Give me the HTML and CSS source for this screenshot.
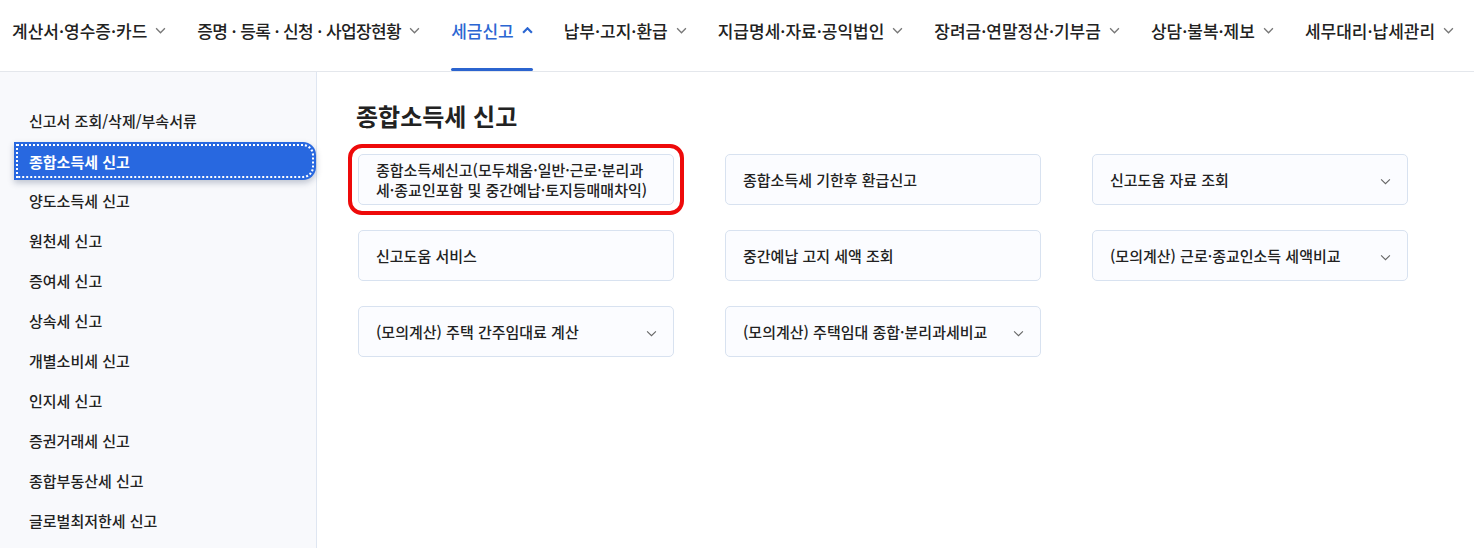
FILE: index.html
```html
<!DOCTYPE html>
<html lang="ko">
<head>
<meta charset="utf-8">
<title>종합소득세 신고</title>
<link rel="stylesheet" href="styles.css">
</head>
<body>
<header class="gnb">
  <nav class="gnb-list">
    <a class="gnb-item"><span>계산서·영수증·카드</span><svg class="chev" viewBox="0 0 10 6"><path d="M1 1l4 4 4-4"/></svg></a>
    <a class="gnb-item"><span class="tight">증명 · 등록 · 신청 · 사업장현황</span><svg class="chev" viewBox="0 0 10 6"><path d="M1 1l4 4 4-4"/></svg></a>
    <a class="gnb-item active"><span>세금신고</span><svg class="chev up" viewBox="0 0 10 6"><path d="M1 5l4-4 4 4"/></svg></a>
    <a class="gnb-item"><span>납부·고지·환급</span><svg class="chev" viewBox="0 0 10 6"><path d="M1 1l4 4 4-4"/></svg></a>
    <a class="gnb-item"><span>지급명세·자료·공익법인</span><svg class="chev" viewBox="0 0 10 6"><path d="M1 1l4 4 4-4"/></svg></a>
    <a class="gnb-item"><span>장려금·연말정산·기부금</span><svg class="chev" viewBox="0 0 10 6"><path d="M1 1l4 4 4-4"/></svg></a>
    <a class="gnb-item"><span>상담·불복·제보</span><svg class="chev" viewBox="0 0 10 6"><path d="M1 1l4 4 4-4"/></svg></a>
    <a class="gnb-item"><span>세무대리·납세관리</span><svg class="chev" viewBox="0 0 10 6"><path d="M1 1l4 4 4-4"/></svg></a>
  </nav>
</header>
<div class="layout">
  <aside class="side">
    <ul class="side-list">
      <li class="side-item">신고서 조회/삭제/부속서류</li>
      <li class="side-item active">종합소득세 신고</li>
      <li class="side-item">양도소득세 신고</li>
      <li class="side-item">원천세 신고</li>
      <li class="side-item">증여세 신고</li>
      <li class="side-item">상속세 신고</li>
      <li class="side-item">개별소비세 신고</li>
      <li class="side-item">인지세 신고</li>
      <li class="side-item">증권거래세 신고</li>
      <li class="side-item">종합부동산세 신고</li>
      <li class="side-item">글로벌최저한세 신고</li>
    </ul>
  </aside>
  <main class="content">
    <h1 class="title">종합소득세 신고</h1>
    <div class="cards">
      <div class="card highlight"><span>종합소득세신고(모두채움·일반·근로·분리과<br>세·종교인포함 및 중간예납·토지등매매차익)</span></div>
      <div class="card"><span>종합소득세 기한후 환급신고</span></div>
      <div class="card"><span>신고도움 자료 조회</span><svg class="cchev" viewBox="0 0 10 6"><path d="M1 1l4 4 4-4"/></svg></div>
      <div class="card"><span>신고도움 서비스</span></div>
      <div class="card"><span>중간예납 고지 세액 조회</span></div>
      <div class="card"><span>(모의계산) 근로·종교인소득 세액비교</span><svg class="cchev" viewBox="0 0 10 6"><path d="M1 1l4 4 4-4"/></svg></div>
      <div class="card"><span>(모의계산) 주택 간주임대료 계산</span><svg class="cchev" viewBox="0 0 10 6"><path d="M1 1l4 4 4-4"/></svg></div>
      <div class="card"><span>(모의계산) 주택임대 종합·분리과세비교</span><svg class="cchev" viewBox="0 0 10 6"><path d="M1 1l4 4 4-4"/></svg></div>
    </div>
  </main>
</div>
</body>
</html>
```
FILE: styles.css
```css
* { box-sizing: border-box; }
html, body { margin: 0; padding: 0; }
body {
  font-family: "Noto Sans CJK KR", "Noto Sans", sans-serif;
  color: #222;
  background: #fff;
  height: 548px;
  overflow: hidden;
}
.gnb {
  height: 72px;
  border-bottom: 1px solid #e4e7ec;
  padding-left: 12px;
}
.gnb-list {
  display: flex;
  align-items: stretch;
  height: 71px;
  gap: 31px;
}
.gnb-item {
  position: relative;
  display: flex;
  align-items: center;
  gap: 8px;
  font-size: 17px;
  font-weight: 500;
  color: #222;
  letter-spacing: 0;
  padding-bottom: 10px;
  white-space: nowrap;
}
.gnb-item .tight { letter-spacing: -0.6px; }
.gnb-item .chev {
  width: 11px;
  height: 7px;
  fill: none;
  stroke: #777;
  stroke-width: 1.2;
}
.gnb-item.active { color: #2b66d2; }
.gnb-item.active .chev { stroke: #2b66d2; stroke-width: 2; }
.gnb-item.active::after {
  content: "";
  position: absolute;
  left: 0;
  right: 0;
  bottom: 0;
  height: 3px;
  border-radius: 2px;
  background: #2b64cf;
}
.layout {
  display: flex;
  height: 476px;
}
.side {
  width: 317px;
  flex: none;
  background: #f8f9fc;
  border-right: 1px solid #dfe6f1;
  padding-top: 28px;
}
.side-list {
  list-style: none;
  margin: 0;
  padding: 0;
}
.side-item {
  height: 40px;
  display: flex;
  align-items: center;
  margin-left: 14px;
  padding-left: 15px;
  font-size: 15px;
  font-weight: 500;
  color: #222;
  letter-spacing: 0;
}
.side-item.active {
  background: #2868e0;
  color: #fff;
  font-weight: 700;
  border-radius: 0 13px 13px 0;
  height: 38px;
  margin-top: 2px;
  box-shadow: 0 3px 6px rgba(20, 40, 80, 0.25);
  outline: 2px dotted #fff;
  outline-offset: -4px;
}
.content {
  flex: 1;
  padding: 29px 0 0 39px;
}
.title {
  margin: 0 0 23px;
  font-size: 24px;
  font-weight: 700;
  line-height: 30px;
  color: #222;
  letter-spacing: 0;
}
.cards {
  display: grid;
  grid-template-columns: repeat(3, 316px);
  column-gap: 51px;
  row-gap: 25px;
  padding-left: 2px;
}
.card {
  position: relative;
  height: 51px;
  display: flex;
  align-items: center;
  justify-content: space-between;
  padding: 0 16px 0 17px;
  background: #fbfcff;
  border: 1px solid #d8e2f0;
  border-radius: 5px;
  font-size: 15px;
  font-weight: 500;
  line-height: 20px;
  color: #222;
  letter-spacing: 0;
}
.card .cchev {
  width: 11px;
  height: 7px;
  flex: none;
  fill: none;
  stroke: #666;
  stroke-width: 1;
  margin-top: 4px;
}
.card.highlight::after {
  content: "";
  position: absolute;
  left: -11px;
  right: -11px;
  top: -11px;
  bottom: -11px;
  border: 4px solid #ee0a0a;
  border-radius: 14px;
}
```
